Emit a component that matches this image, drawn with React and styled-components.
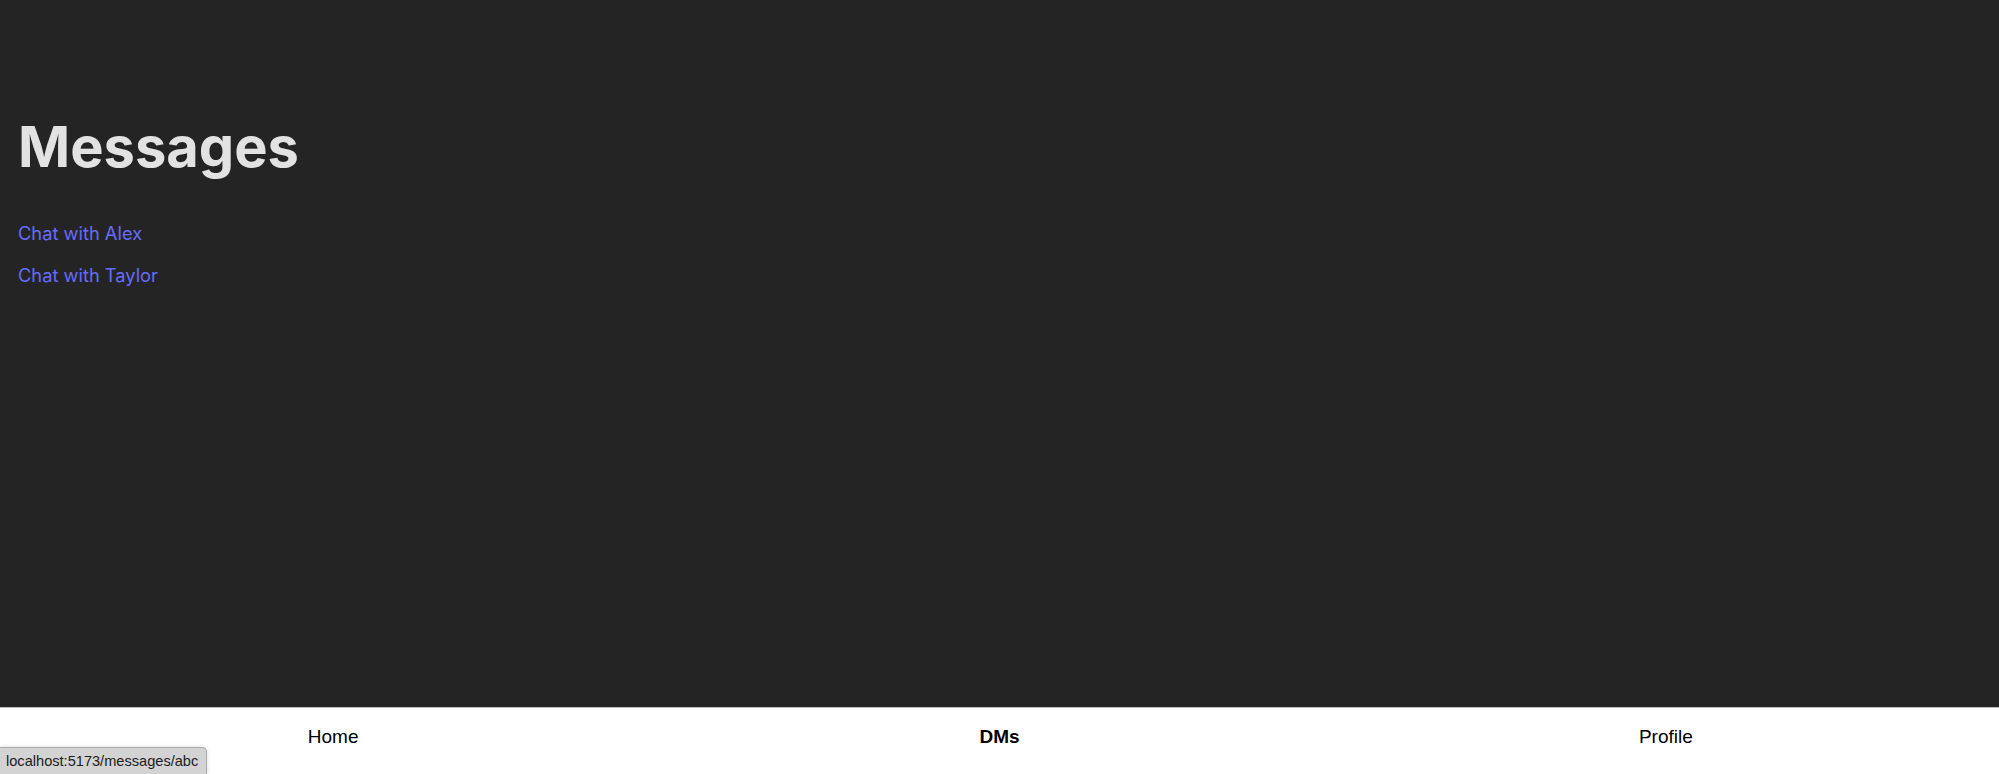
import React from 'react';
import styled, { createGlobalStyle } from 'styled-components';

const GlobalStyle = createGlobalStyle`
    html, body {
        margin: 0;
        padding: 0;
        height: 100%;
    }
    body {
        font-family: Inter, "Noto Sans", sans-serif;
        background: #ffffff;
    }
    #root {
        height: 100%;
    }
`;

const Page = styled.div`
    height: 100vh;
    display: flex;
    flex-direction: column;
    position: relative;
    overflow: hidden;
`;

const Main = styled.main`
    flex: 1;
    background: #242424;
    padding: 117px 18px 0;
    box-sizing: border-box;
`;

const Title = styled.h1`
    margin: 0;
    font-family: Inter, sans-serif;
    font-size: 56px;
    font-weight: 700;
    line-height: 1.1;
    color: rgba(255, 255, 255, 0.87);
`;

const ChatList = styled.div`
    display: flex;
    flex-direction: column;
    align-items: flex-start;
    gap: 18px;
    margin-top: 42px;
`;

const ChatLink = styled.a`
    font-family: Inter, sans-serif;
    font-size: 18.3px;
    font-weight: 400;
    line-height: 24px;
    color: #646cff;
    text-decoration: none;
    cursor: pointer;
`;

const BottomNav = styled.nav`
    height: 66px;
    flex-shrink: 0;
    display: flex;
    background: #ffffff;
    border-top: 1px solid #b8b8b8;
`;

const NavItem = styled.a`
    flex: 1;
    text-align: center;
    padding-top: 18px;
    font-family: "Liberation Sans", Arial, sans-serif;
    font-size: 19px;
    font-weight: ${(p) => (p.$active ? 700 : 400)};
    color: #000000;
    text-decoration: none;
`;

const StatusBubble = styled.div`
    position: absolute;
    left: 0;
    bottom: 0;
    height: 26px;
    padding: 0 8px 0 6px;
    display: flex;
    align-items: center;
    background: #d3d3d3;
    border: 1px solid #a9a9a9;
    border-left: none;
    border-bottom: none;
    border-top-right-radius: 5px;
    box-shadow: 0 0 4px rgba(0, 0, 0, 0.15);
    font-family: "Liberation Sans", Arial, sans-serif;
    font-size: 14.6px;
    color: #1c1c1c;
`;

const chats = [
    { id: 'abc', name: 'Alex' },
    { id: 'def', name: 'Taylor' },
];

const App = () => {
    return (
        <>
            <GlobalStyle />
            <Page>
                <Main>
                    <Title>Messages</Title>
                    <ChatList>
                        {chats.map((c) => (
                            <ChatLink key={c.id} href={`/messages/${c.id}`}>{`Chat with ${c.name}`}</ChatLink>
                        ))}
                    </ChatList>
                </Main>
                <BottomNav>
                    <NavItem href="/">Home</NavItem>
                    <NavItem href="/messages" $active>DMs</NavItem>
                    <NavItem href="/profile">Profile</NavItem>
                </BottomNav>
                <StatusBubble>localhost:5173/messages/abc</StatusBubble>
            </Page>
        </>
    );
};

export default App;
